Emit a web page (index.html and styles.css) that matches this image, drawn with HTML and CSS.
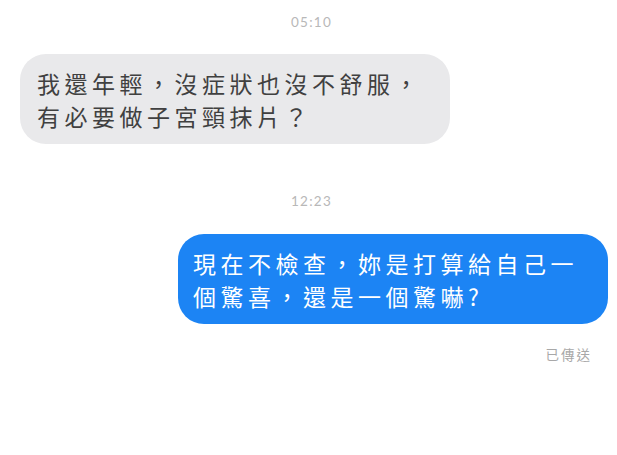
FILE: index.html
```html
<!DOCTYPE html>
<html lang="zh-Hant">
<head>
<meta charset="utf-8">
<link rel="stylesheet" href="styles.css">
</head>
<body>
<main class="chat">
  <div class="time time-first">05:10</div>
  <div class="row row-in">
    <div class="bubble bubble-in">我還年輕，沒症狀也沒不舒服，有必要做子宮頸抹片？</div>
  </div>
  <div class="time time-second">12:23</div>
  <div class="row row-out">
    <div class="bubble bubble-out">現在不檢查，妳是打算給自己一個驚喜，還是一個驚嚇?</div>
  </div>
  <div class="status">已傳送</div>
</main>
</body>
</html>
```

FILE: styles.css
```css
html, body {
  margin: 0;
  padding: 0;
  background: #ffffff;
}

.chat {
  width: 617px;
  height: 455px;
  display: flex;
  flex-direction: column;
  font-family: "Noto Sans CJK TC", "Noto Sans", sans-serif;
}

.time {
  text-align: center;
  font-family: "Lato", "Open Sans", sans-serif;
  font-size: 13.5px;
  line-height: 16px;
  letter-spacing: 1.3px;
  color: #b8b8b8;
  padding-left: 6px;
}

.time-first {
  margin-top: 14px;
}

.time-second {
  margin-top: 49px;
}

.row {
  display: flex;
}

.row-in {
  justify-content: flex-start;
  padding-left: 20px;
  margin-top: 24px;
}

.row-out {
  justify-content: flex-end;
  padding-right: 9px;
  margin-top: 25px;
}

.bubble {
  box-sizing: border-box;
  max-width: 430px;
  border-radius: 26px;
  font-size: 23px;
  font-weight: 400;
  line-height: 33px;
  letter-spacing: 4.5px;
  padding: 13px 14px 11px 17px;
}

.bubble-in {
  background: #e9e9eb;
  color: #404040;
}

.bubble-out {
  background: #1c84f4;
  color: #ffffff;
  padding-left: 15px;
}

.status {
  align-self: flex-end;
  margin-right: 25px;
  margin-top: 21px;
  font-size: 13.5px;
  font-weight: 400;
  line-height: 18px;
  letter-spacing: 2px;
  color: #a8a8a8;
}
```
